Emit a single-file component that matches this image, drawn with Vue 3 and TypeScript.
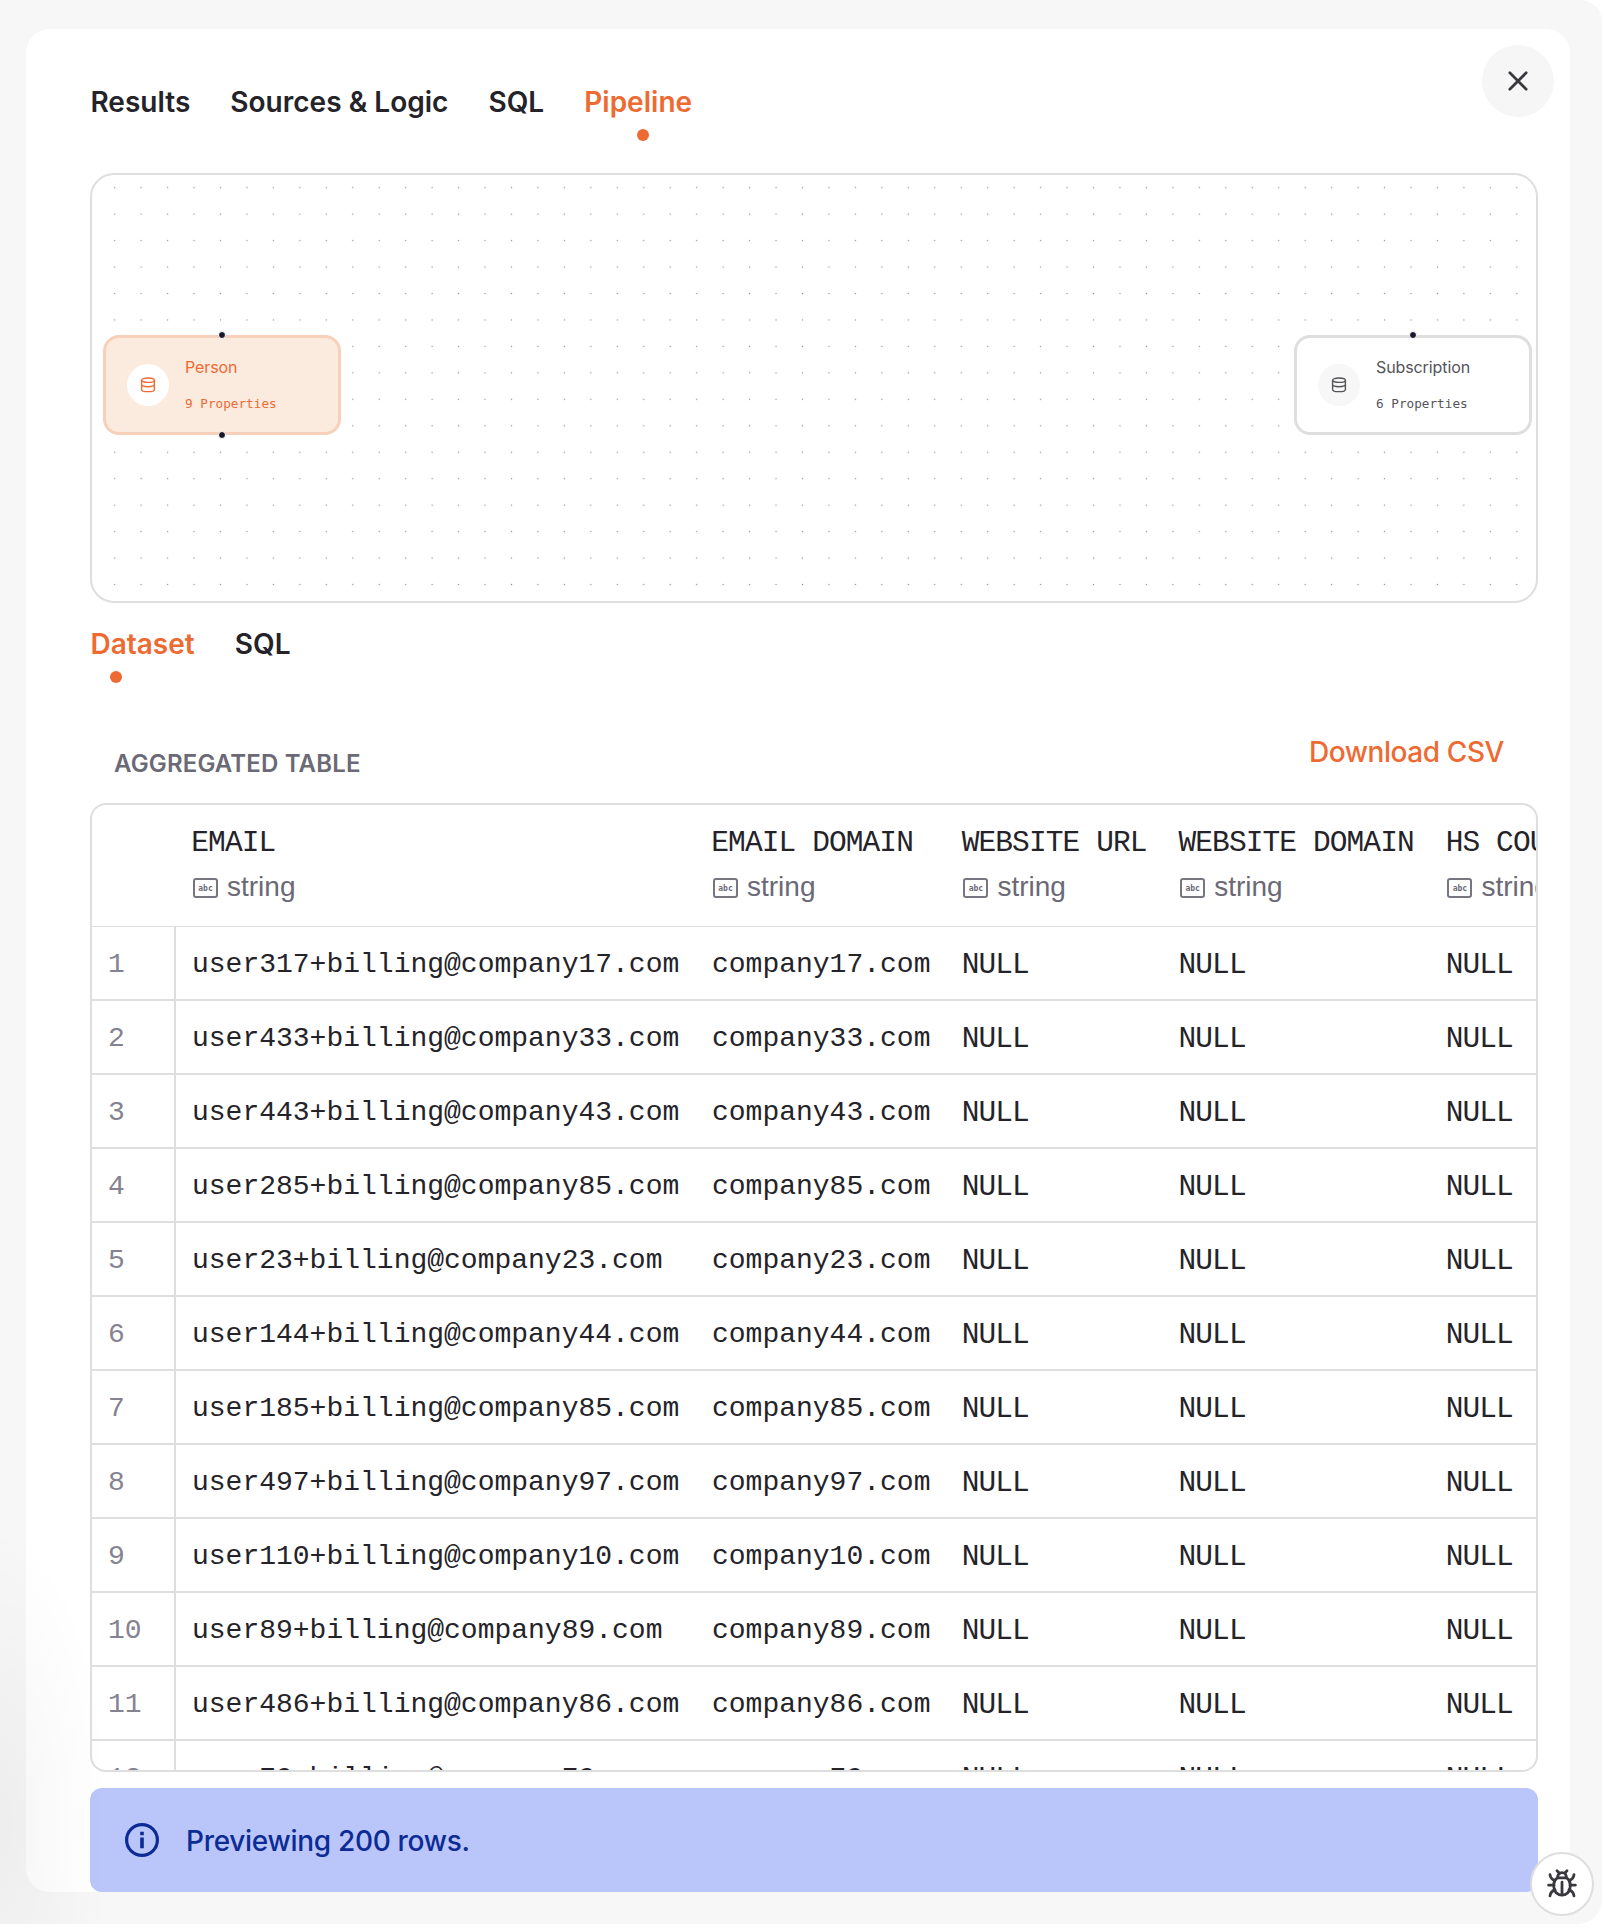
<script setup lang="ts">
import { ref } from 'vue'

interface Column {
  name: string
  type: string
}

interface PipelineNode {
  title: string
  properties: number
  x: number
  selected: boolean
}

const tabs = ['Results', 'Sources & Logic', 'SQL', 'Pipeline']
const activeTab = ref('Pipeline')

const detailTabs = ['Dataset', 'SQL']
const activeDetailTab = ref('Dataset')

const nodes: PipelineNode[] = [
  { title: 'Person', properties: 9, x: 11, selected: true },
  { title: 'Subscription', properties: 6, x: 1202, selected: false },
]

const columns: Column[] = [
  { name: 'EMAIL', type: 'string' },
  { name: 'EMAIL DOMAIN', type: 'string' },
  { name: 'WEBSITE URL', type: 'string' },
  { name: 'WEBSITE DOMAIN', type: 'string' },
  { name: 'HS COUNTRY', type: 'string' },
]

const accounts: [number, number][] = [
  [317, 17],
  [433, 33],
  [443, 43],
  [285, 85],
  [23, 23],
  [144, 44],
  [185, 85],
  [497, 97],
  [110, 10],
  [89, 89],
  [486, 86],
  [79, 79],
]

const rows = accounts.map(([user, company]) => [
  `user${user}+billing@company${company}.com`,
  `company${company}.com`,
  'NULL',
  'NULL',
  'NULL',
])
</script>

<template>
  <div class="window">
    <main class="panel">
      <nav class="tabs">
        <button
          v-for="tab in tabs"
          :key="tab"
          class="tab"
          :class="{ active: tab === activeTab }"
          @click="activeTab = tab"
        >
          {{ tab }}
        </button>
      </nav>

      <button class="close" aria-label="Close">
        <svg width="24" height="24" viewBox="0 0 24 24">
          <path d="M3.8 3.8 20.2 20.2 M20.2 3.8 3.8 20.2" />
        </svg>
      </button>

      <section class="canvas">
        <svg class="grid" width="1444" height="426">
          <defs>
            <pattern id="dots" x="9.45" y="-0.55" width="26.455" height="26.455" patternUnits="userSpaceOnUse">
              <circle cx="13.23" cy="13.23" r="0.75" fill="#96969e" />
            </pattern>
          </defs>
          <rect width="1444" height="426" fill="url(#dots)" />
        </svg>
        <article
          v-for="node in nodes"
          :key="node.title"
          class="node"
          :class="{ selected: node.selected }"
          :style="{ left: node.x + 'px' }"
        >
          <i class="handle top"></i>
          <span class="node-icon">
            <svg width="16" height="16" viewBox="0 0 16 16">
              <ellipse cx="8" cy="3.2" rx="6.4" ry="2.2" />
              <path d="M1.6 3.2v9.2c0 1.3 1.6 2.2 6.4 2.2s6.4-.9 6.4-2.2V3.2 M1.6 7.6c0 1.3 1.6 2.1 6.4 2.1s6.4-.8 6.4-2.1" />
            </svg>
          </span>
          <div class="node-text">
            <span class="node-title">{{ node.title }}</span>
            <span class="node-meta">{{ node.properties }} Properties</span>
          </div>
          <i v-if="node.selected" class="handle bottom"></i>
        </article>
      </section>

      <nav class="tabs detail">
        <button
          v-for="tab in detailTabs"
          :key="tab"
          class="tab"
          :class="{ active: tab === activeDetailTab }"
          @click="activeDetailTab = tab"
        >
          {{ tab }}
        </button>
      </nav>

      <header class="table-head">
        <h2>AGGREGATED TABLE</h2>
        <a>Download CSV</a>
      </header>

      <section class="table">
        <div class="row header">
          <div class="index"></div>
          <div v-for="(column, c) in columns" :key="column.name" class="cell" :class="'c' + c">
            <div class="name">{{ column.name }}</div>
            <div class="type">
              <span class="abc">abc</span>
              <span>{{ column.type }}</span>
            </div>
          </div>
        </div>
        <div v-for="(row, r) in rows" :key="r" class="row">
          <div class="index">{{ r + 1 }}</div>
          <div v-for="(value, c) in row" :key="c" class="cell" :class="['c' + c, { caps: c > 1 }]">{{ value }}</div>
        </div>
      </section>

      <footer class="notice">
        <svg width="36" height="36" viewBox="0 0 36 36">
          <circle cx="18" cy="18" r="15.4" fill="none" stroke="currentColor" stroke-width="3.2" />
          <path d="M16.2 9.8h3.6v3.4h-3.6z M16.2 15.6h3.6v10.6h-3.6z" fill="currentColor" />
        </svg>
        <span>Previewing 200 rows.</span>
      </footer>
    </main>

    <div class="shade"></div>

    <button class="bug" aria-label="Report a bug">
      <svg width="32" height="32" viewBox="0 0 32 32">
        <path d="M11.4 9.8h9.2c2.4 1.6 3.6 3.6 3.6 6.4v2.4c0 5.2-3.6 8.6-8.2 8.6s-8.2-3.4-8.2-8.6v-2.4c0-2.8 1.2-4.8 3.6-6.4z" />
        <path d="M11.6 9.4c0-2.8 1.8-4.8 4.4-4.8s4.4 2 4.4 4.8 M16 14.2v12.6" />
        <path d="M13 4.8 11 2.8 M19 4.8 21 2.8 M8 17.2H2.6 M24 17.2h5.4 M8.8 12.6C6 11.6 4.4 9.8 4 6.6 M23.2 12.6c2.8-1 4.4-2.8 4.8-6 M9 21.8c-3 1-4.6 2.8-5 6 M23 21.8c3 1 4.6 2.8 5 6" />
      </svg>
    </button>
  </div>
</template>

<style>
body {
  background: #fff;
}
</style>

<style scoped>
.window {
  position: relative;
  box-sizing: border-box;
  width: 1602px;
  height: 1924px;
  padding: 29px 32px 32px 26px;
  overflow: hidden;
  background: #f7f7f7;
  border-radius: 0 22px 24px 0;
  font-family: Inter, sans-serif;
  color: #242329;
}

button {
  padding: 0;
  border: 0;
  background: none;
  font: inherit;
  color: inherit;
}

.panel {
  position: relative;
  box-sizing: border-box;
  display: flex;
  flex-direction: column;
  height: 1863px;
  padding: 0 32px 0 64px;
  background: #fff;
  border-radius: 24px;
}

.tabs {
  display: flex;
  flex: none;
  gap: 40px;
  height: 144px;
  padding-top: 56px;
  padding-left: 0.4px;
  box-sizing: border-box;
}

.tab {
  position: relative;
  height: 34px;
  font-size: 28px;
  font-weight: 560;
  line-height: 34px;
  letter-spacing: 0.02px;
  white-space: nowrap;
}

.tab.active {
  color: #ed6b33;
}

.tab.active::after {
  content: '';
  position: absolute;
  top: 44px;
  left: 53px;
  width: 12px;
  height: 12px;
  border-radius: 50%;
  background: #ed6b33;
}

.detail {
  height: 115px;
  padding-top: 24px;
}

.detail .tab.active::after {
  left: 19.6px;
}

.close {
  position: absolute;
  top: 16px;
  right: 16px;
  display: grid;
  place-items: center;
  width: 72px;
  height: 72px;
  border-radius: 50%;
  background: #f6f6f7;
}

.close svg {
  fill: none;
  stroke: #39383d;
  stroke-width: 2.7;
  stroke-linecap: round;
}

.canvas {
  position: relative;
  box-sizing: border-box;
  flex: none;
  height: 430px;
  border: 2px solid #dedede;
  border-radius: 24px;
  overflow: hidden;
}

.grid {
  display: block;
}

.node {
  position: absolute;
  top: 160px;
  box-sizing: border-box;
  display: flex;
  align-items: center;
  width: 238px;
  height: 100px;
  padding-left: 21px;
  border: 3px solid #dedede;
  border-radius: 16px;
  background: #fff;
  color: #55545b;
}

.node.selected {
  border-color: #f6d0b8;
  background: #fbeade;
  color: #ed6b33;
}

.node-icon {
  display: grid;
  place-items: center;
  width: 42px;
  height: 42px;
  border-radius: 50%;
  background: #f7f7f7;
}

.selected .node-icon {
  background: #fff;
}

.node-icon svg {
  fill: none;
  stroke: currentColor;
  stroke-width: 1.4;
}

.node-text {
  display: flex;
  flex-direction: column;
  gap: 18px;
  margin-left: 16px;
}

.node-title {
  font-size: 16px;
  line-height: 20px;
  letter-spacing: -0.1px;
}

.node-meta {
  font-family: 'DejaVu Sans Mono', monospace;
  font-size: 12.7px;
  line-height: 18px;
}

.handle {
  position: absolute;
  left: 112px;
  width: 6px;
  height: 6px;
  border: 1px solid #fff;
  border-radius: 50%;
  background: #1a192b;
}

.handle.top {
  top: -7px;
}

.handle.bottom {
  bottom: -7px;
}

.table-head {
  display: flex;
  flex: none;
  justify-content: space-between;
  height: 85px;
  padding: 0 34px 0 24px;
}

.table-head h2 {
  margin: 31px 0 0;
  font-size: 24px;
  font-weight: 560;
  line-height: 30px;
  letter-spacing: 0.15px;
  color: #6b6976;
}

.table-head a {
  margin-top: 17px;
  font-size: 28px;
  font-weight: 500;
  line-height: 34px;
  letter-spacing: -0.42px;
  color: #ed6b33;
}

.table {
  box-sizing: border-box;
  flex: none;
  height: 969px;
  border: 2px solid #dedede;
  border-radius: 16px;
  overflow: hidden;
  font-family: 'Liberation Mono', monospace;
  font-size: 28px;
}

.row {
  box-sizing: border-box;
  display: flex;
  width: 1700px;
  height: 74px;
  border-bottom: 2px solid #dedede;
  line-height: 76px;
}

.row.header {
  height: 122px;
  border-bottom-width: 1px;
  line-height: 34px;
}

.index {
  box-sizing: border-box;
  flex: none;
  width: 84px;
  padding-left: 16px;
  border-right: 2px solid #dedede;
  color: #858391;
}

.header .index {
  border-right-color: transparent;
}

.cell {
  box-sizing: border-box;
  flex: none;
  padding-left: 16px;
  white-space: nowrap;
}

.c0 {
  width: 520px;
}

.c1 {
  width: 250.4px;
}

.c2 {
  width: 216.8px;
}

.c3 {
  width: 267.2px;
}

.name {
  margin-top: 21px;
}

.name,
.caps {
  font-size: 29.5px;
  letter-spacing: -0.9px;
  text-indent: -0.7px;
}

.type {
  display: flex;
  align-items: center;
  gap: 9px;
  height: 34px;
  margin-top: 10px;
  font-family: 'Liberation Sans', sans-serif;
  color: #6b6976;
}

.abc {
  box-sizing: border-box;
  width: 25px;
  height: 20px;
  margin-top: 2px;
  margin-left: 1px;
  border: 2px solid #77757f;
  border-radius: 3px;
  font: bold 8px/17px 'DejaVu Sans Mono', monospace;
  text-align: center;
}

.notice {
  display: flex;
  flex: none;
  align-items: center;
  gap: 26px;
  height: 104px;
  margin-top: 16px;
  padding-left: 34px;
  border-radius: 12px;
  background: #bac6f9;
  color: #0c2b94;
  font-size: 28px;
  font-weight: 500;
  letter-spacing: -0.3px;
}

.notice span {
  padding-top: 2px;
}

.shade {
  position: absolute;
  left: 0;
  bottom: 0;
  width: 110px;
  height: 400px;
  background: radial-gradient(ellipse 100% 75% at 0 75%, rgba(0, 0, 0, 0.04), transparent);
  pointer-events: none;
}

.bug {
  position: absolute;
  right: 8px;
  bottom: 8px;
  display: grid;
  place-items: center;
  width: 64px;
  height: 64px;
  border: 2px solid #dedede;
  border-radius: 50%;
  background: #fff;
}

.bug svg {
  fill: none;
  stroke: #39383d;
  stroke-width: 2.8;
  stroke-linecap: round;
  stroke-linejoin: round;
}
</style>
